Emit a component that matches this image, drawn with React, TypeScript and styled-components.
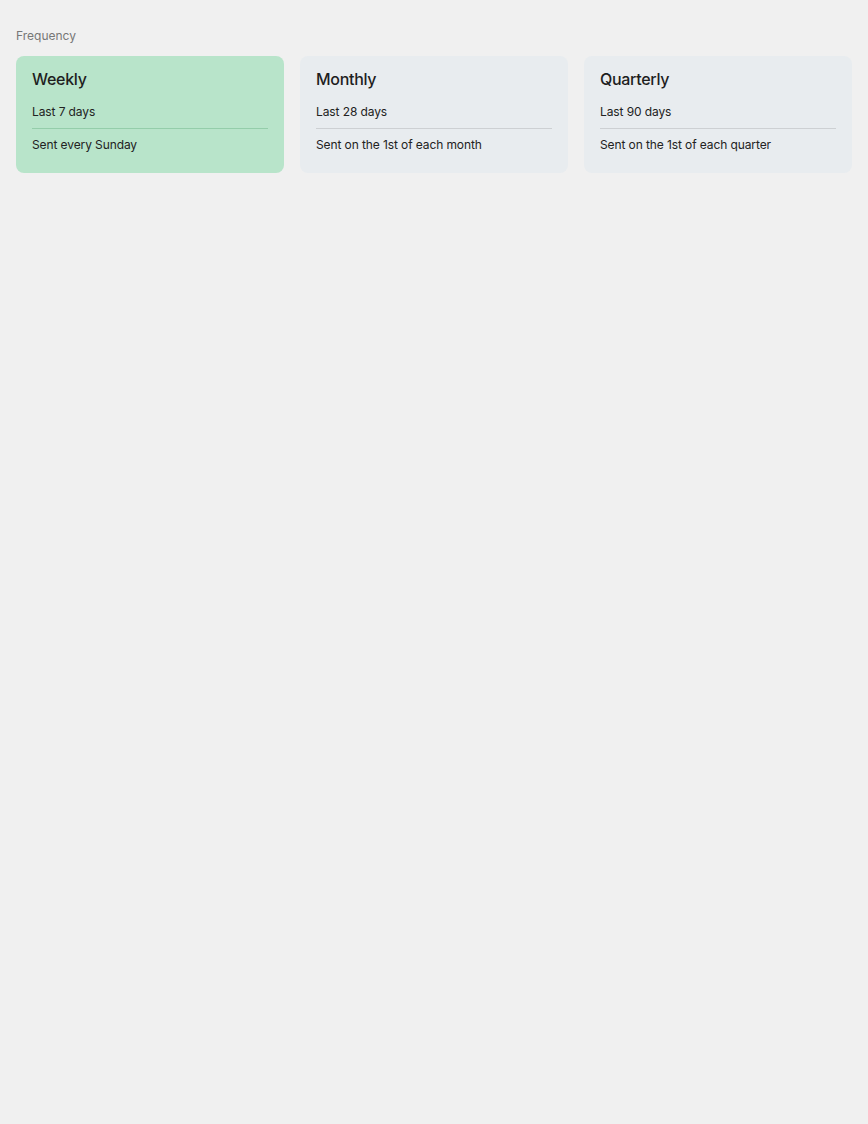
import React from "react";
import styled, { createGlobalStyle } from "styled-components";

const Global = createGlobalStyle`
  html, body { margin: 0; padding: 0; background: #f0f0f0; }
  body { font-family: Inter, "Noto Sans", sans-serif; color: #222; }
`;

const Page = styled.div`
  padding: 28px 16px;
`;

const Label = styled.div`
  font-size: 12px;
  line-height: 16px;
  color: #777;
  margin-bottom: 12px;
`;

const Grid = styled.div`
  display: grid;
  grid-template-columns: repeat(3, 1fr);
  gap: 16px;
`;

const Card = styled.div<{ $active?: boolean }>`
  background: ${(p) => (p.$active ? "#b8e4ca" : "#e8ecef")};
  border-radius: 8px;
  padding: 14px 16px 20px;
  display: flex;
  flex-direction: column;
  --divider: ${(p) => (p.$active ? "#94cdaa" : "#cdd0d3")};
`;

const Title = styled.div`
  font-size: 16px;
  line-height: 18px;
  font-weight: 500;
  color: #1e1e1e;
  letter-spacing: -0.3px;
`;

const Range = styled.div`
  margin-top: 16px;
  font-size: 12px;
  line-height: 16px;
  padding-bottom: 8px;
  border-bottom: 1px solid var(--divider);
  letter-spacing: -0.1px;
`;

const Schedule = styled.div`
  font-size: 12px;
  line-height: 16px;
  padding-top: 8px;
  letter-spacing: -0.1px;
`;

const options = [
  { title: "Weekly", range: "Last 7 days", schedule: "Sent every Sunday", active: true },
  { title: "Monthly", range: "Last 28 days", schedule: "Sent on the 1st of each month" },
  { title: "Quarterly", range: "Last 90 days", schedule: "Sent on the 1st of each quarter" },
];

export default function App() {
  return (
    <>
      <Global />
      <Page>
        <Label>Frequency</Label>
        <Grid>
          {options.map((o) => (
            <Card key={o.title} $active={o.active}>
              <Title>{o.title}</Title>
              <Range>{o.range}</Range>
              <Schedule>{o.schedule}</Schedule>
            </Card>
          ))}
        </Grid>
      </Page>
    </>
  );
}
